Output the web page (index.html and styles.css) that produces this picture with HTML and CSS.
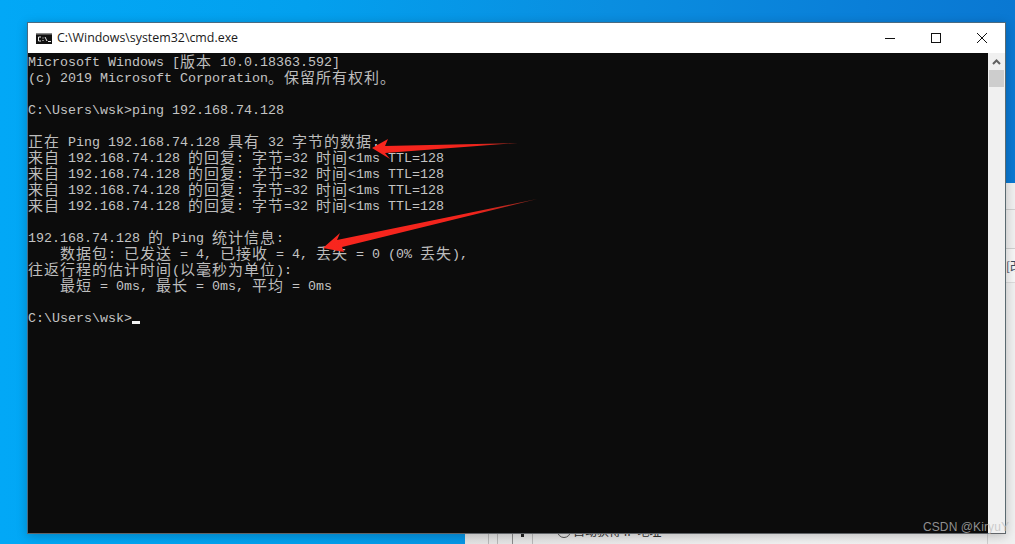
FILE: index.html
```html
<!DOCTYPE html>
<html lang="zh-CN">
<head>
<meta charset="utf-8">
<title>cmd.exe</title>
<link rel="stylesheet" href="styles.css">
</head>
<body>
<div class="desktop">
  <div class="backwin">
    <div class="back-rule rule-a"></div>
    <div class="back-rule rule-b"></div>
    <div class="back-band"><span class="back-glyph">[改</span></div>
    <div class="back-v v1"></div>
    <div class="back-v v2"></div>
    <div class="back-v v3"></div>
    <div class="back-v v4"></div>
    <div class="back-v v5"></div>
    <div class="back-handle"></div>
    <div class="back-radio"></div>
    <span class="back-text">自动获得 IP 地址</span>
  </div>

  <div class="window">
    <div class="titlebar">
      <svg class="app-icon" width="16" height="11" viewBox="0 0 16 11">
        <rect x="0" y="0" width="16" height="11" fill="#111"/>
        <rect x="0" y="0" width="16" height="1.5" fill="#8a8a8a"/>
        <path d="M5 4H2.5V8H5M7 4.5V5.5M7 7V8M9 4L11 8M12 8.5H15" fill="none" stroke="#e8e8e8" stroke-width="1"/>
      </svg>
      <span class="title">C:\Windows\system32\cmd.exe</span>
      <div class="controls">
        <div class="ctrl">
          <svg width="10" height="10" viewBox="0 0 10 10"><path d="M0 5.5H10" stroke="#111" stroke-width="1"/></svg>
        </div>
        <div class="ctrl">
          <svg width="10" height="10" viewBox="0 0 10 10"><rect x=".5" y=".5" width="9" height="9" fill="none" stroke="#111" stroke-width="1"/></svg>
        </div>
        <div class="ctrl">
          <svg width="10" height="10" viewBox="0 0 10 10"><path d="M0 0L10 10M10 0L0 10" stroke="#111" stroke-width="1"/></svg>
        </div>
      </div>
    </div>
    <div class="client">
      <div class="console">
<div class="row">Microsoft Windows [<span class="c">版本</span> 10.0.18363.592]</div>
<div class="row">(c) 2019 Microsoft Corporation<span class="c">。保留所有权利。</span></div>
<div class="row"></div>
<div class="row">C:\Users\wsk&gt;ping 192.168.74.128</div>
<div class="row"></div>
<div class="row"><span class="c">正在</span> Ping 192.168.74.128 <span class="c">具有</span> 32 <span class="c">字节的数据</span>:</div>
<div class="row"><span class="c">来自</span> 192.168.74.128 <span class="c">的回复</span>: <span class="c">字节</span>=32 <span class="c">时间</span>&lt;1ms TTL=128</div>
<div class="row"><span class="c">来自</span> 192.168.74.128 <span class="c">的回复</span>: <span class="c">字节</span>=32 <span class="c">时间</span>&lt;1ms TTL=128</div>
<div class="row"><span class="c">来自</span> 192.168.74.128 <span class="c">的回复</span>: <span class="c">字节</span>=32 <span class="c">时间</span>&lt;1ms TTL=128</div>
<div class="row"><span class="c">来自</span> 192.168.74.128 <span class="c">的回复</span>: <span class="c">字节</span>=32 <span class="c">时间</span>&lt;1ms TTL=128</div>
<div class="row"></div>
<div class="row">192.168.74.128 <span class="c">的</span> Ping <span class="c">统计信息</span>:</div>
<div class="row">    <span class="c">数据包</span>: <span class="c">已发送</span> = 4, <span class="c">已接收</span> = 4, <span class="c">丢失</span> = 0 (0% <span class="c">丢失</span>),</div>
<div class="row"><span class="c">往返行程的估计时间</span>(<span class="c">以毫秒为单位</span>):</div>
<div class="row">    <span class="c">最短</span> = 0ms, <span class="c">最长</span> = 0ms, <span class="c">平均</span> = 0ms</div>
<div class="row"></div>
<div class="row">C:\Users\wsk&gt;<span class="cursor"></span></div>
      </div>
      <div class="scrollbar">
        <div class="scroll-up">
          <svg width="9" height="7" viewBox="0 0 9 7"><path d="M1 6L4.5 2.5L8 6" fill="none" stroke="#606060" stroke-width="2"/></svg>
        </div>
        <div class="scroll-thumb"></div>
      </div>
    </div>
  </div>

  <svg class="arrows" width="1015" height="544" viewBox="0 0 1015 544">
    <defs>
      <linearGradient id="fade1" gradientUnits="userSpaceOnUse" x1="372" y1="148" x2="518" y2="143">
        <stop offset="0" stop-color="#f8261e"/>
        <stop offset=".7" stop-color="#f2241c"/>
        <stop offset="1" stop-color="#a02a20"/>
      </linearGradient>
      <linearGradient id="fade2" gradientUnits="userSpaceOnUse" x1="323" y1="248" x2="537" y2="199">
        <stop offset="0" stop-color="#f8261e"/>
        <stop offset=".7" stop-color="#f2241c"/>
        <stop offset="1" stop-color="#8a2a20"/>
      </linearGradient>
    </defs>
    <polygon points="372,148 388,139 385,146 518,143 385,153 390,159" fill="url(#fade1)"/>
    <polygon points="323,248 340,233 337,240 537,199 342,247 344,252" fill="url(#fade2)"/>
  </svg>

  <span class="watermark">CSDN @KiryuY</span>
</div>
</body>
</html>
```
FILE: styles.css
```css
* { box-sizing: border-box; }
html, body { margin: 0; padding: 0; }
body { width: 1015px; height: 544px; overflow: hidden; }

.desktop {
  position: relative;
  width: 1015px;
  height: 544px;
  overflow: hidden;
  background:
    linear-gradient(90deg, #02a8f6 0%, #03a0ee 30%, #0a8ee0 60%, #0a7fd8 85%, #0a78d2 100%);
}

/* window behind the console */
.backwin {
  position: absolute;
  left: 465px;
  top: 183px;
  width: 550px;
  height: 361px;
  overflow: hidden;
  background: linear-gradient(90deg, #e4e4e4 0%, #f2f2f2 60%, #f0f0f0 100%);
}
.back-rule { position: absolute; left: 0; right: 0; height: 1px; background: #cfcfcf; }
.rule-a { top: 26px; }
.rule-b { top: 65px; }
.back-band {
  position: absolute;
  left: 0;
  right: 0;
  top: 66px;
  height: 34px;
  background: #f6f6f6;
  border-bottom: 1px solid #dcdcdc;
}
.back-glyph {
  position: absolute;
  left: 541px;
  top: 7px;
  font: 12px/20px "Noto Sans CJK SC", sans-serif;
  color: #3a4a5c;
  white-space: nowrap;
}
.back-v { position: absolute; top: 340px; width: 1px; height: 21px; background: #b8b8b8; }
.v1 { left: 23px; }
.v2 { left: 32px; }
.v3 { left: 47px; background: #8a8a8a; }
.v4 { left: 67px; }
.v5 { left: 522px; background: #cfcfcf; }
.back-handle {
  position: absolute;
  left: 56px;
  top: 345px;
  width: 3px;
  height: 9px;
  background: #222;
}
.back-radio {
  position: absolute;
  left: 92px;
  top: 341px;
  width: 14px;
  height: 14px;
  border: 1px solid #555;
  border-radius: 50%;
}
.back-text {
  position: absolute;
  left: 108px;
  top: 340px;
  font: 12px/16px "Noto Sans CJK SC", sans-serif;
  color: #333;
  white-space: nowrap;
}

/* console window */
.window {
  position: absolute;
  left: 27px;
  top: 22px;
  width: 979px;
  height: 512px;
  display: flex;
  flex-direction: column;
  border: 1px solid #4a6a80;
  border-right-color: #5a6a70;
  border-bottom-color: #606468;
  box-shadow: 0 2px 10px rgba(0, 0, 0, .22);
  background: #fff;
}
.titlebar {
  flex: 0 0 30px;
  display: flex;
  align-items: center;
  padding-left: 8px;
  background: #fff;
}
.app-icon { flex: none; margin-right: 5px; }
.title {
  font: 12.4px/16px "Open Sans", "Noto Sans", sans-serif;
  color: #1a1a1a;
  white-space: nowrap;
}
.controls { display: flex; margin-left: auto; }
.ctrl {
  width: 46px;
  height: 30px;
  display: flex;
  align-items: center;
  justify-content: center;
}

.client { flex: 1; display: flex; min-height: 0; }
.console {
  width: 960px;
  background: #0c0c0c;
  color: #c4c4c4;
  font-family: "Liberation Mono", "Noto Sans CJK SC", monospace;
  font-size: 13.3333px;
  line-height: 20px;
  overflow: hidden;
}
.row { height: 16px; white-space: pre; }
.c {
  font-family: "Noto Sans CJK SC", sans-serif;
  font-size: 15px;
  letter-spacing: 1px;
  line-height: 0;
  vertical-align: -1px;
  color: #bdbdbd;
}
.cursor {
  display: inline-block;
  width: 8px;
  height: 3px;
  vertical-align: -2px;
  background: #f2f2f2;
}

.scrollbar {
  width: 17px;
  background: #f0f0f0;
  display: flex;
  flex-direction: column;
  align-items: center;
}
.scroll-up {
  height: 17px;
  width: 15px;
  display: flex;
  align-items: center;
  justify-content: center;
}
.scroll-thumb { width: 15px; height: 17px; background: #cdcdcd; }

.arrows { position: absolute; left: 0; top: 0; pointer-events: none; }

.watermark {
  position: absolute;
  left: 923px;
  top: 520px;
  font: 12px/14px "Liberation Sans", sans-serif;
  letter-spacing: .1px;
  color: rgba(190, 190, 190, .75);
  white-space: nowrap;
}
```
